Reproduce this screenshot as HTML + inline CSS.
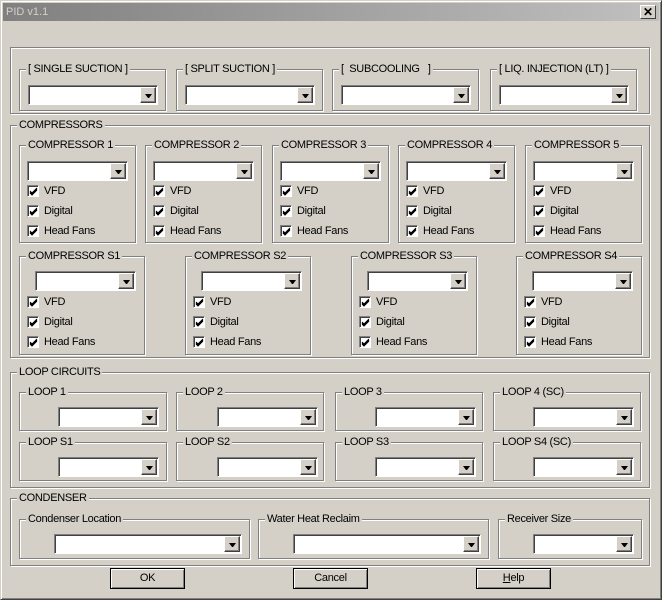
<!DOCTYPE html>
<html><head><meta charset="utf-8"><style>
*{box-sizing:border-box;margin:0;padding:0}
body{width:662px;height:600px;background:#d4d0c8;position:relative;overflow:hidden;font-family:"Liberation Sans",sans-serif;font-size:11px;color:#000}
.a{position:absolute}
.g{position:absolute;border:1px solid #808080;box-shadow:1px 1px 0 #fff, inset 1px 1px 0 #fff}
.gl{position:absolute;top:-8px;left:6px;background:#d4d0c8;padding:0 2px;white-space:nowrap;letter-spacing:-0.3px;line-height:14px}
.c{position:absolute;height:20px;background:#fff;border-top:1px solid #808080;border-left:1px solid #808080;border-right:1px solid #fff;border-bottom:1px solid #fff;box-shadow:inset 1px 1px 0 #404040}
.c b{position:absolute;right:1px;top:1px;width:16px;height:16px;background:#d4d0c8;border-top:1px solid #fff;border-left:1px solid #fff;border-right:1px solid #404040;border-bottom:1px solid #404040;box-shadow:inset -1px -1px 0 #808080}
.c b:after{content:"";position:absolute;left:4px;top:6px;border-left:3px solid transparent;border-right:3px solid transparent;border-top:4px solid #000;width:1px}
.k{position:absolute;width:12px;height:12px;background:#fff;border-top:1px solid #808080;border-left:1px solid #808080;border-right:1px solid #fff;border-bottom:1px solid #fff;box-shadow:inset 1px 1px 0 #404040}
.k svg{position:absolute;left:1px;top:1px}
.kl{position:absolute;white-space:nowrap;letter-spacing:-0.3px}
.btn{position:absolute;height:21px;width:75px;background:#d4d0c8;border:1px solid #000;box-shadow:inset 1px 1px 0 #fff,inset -1px -1px 0 #808080;text-align:center;line-height:19px;letter-spacing:-0.3px}
</style></head><body>
<div class="a" style="left:0;top:0;width:662px;height:600px;border:1px solid #d4d0c8;border-right-color:#404040;border-bottom-color:#404040;box-shadow:inset 1px 1px 0 #fff,inset -1px -1px 0 #808080"></div>
<div class="a" style="left:3px;top:3px;width:656px;height:18px;background:linear-gradient(90deg,#808080,#c0c0c0)"></div>
<div class="a" style="left:6px;top:4px;color:#d4d0c8;font-size:11px;line-height:16px">PID v1.1</div>
<div class="a" style="left:640px;top:5px;width:16px;height:14px;background:#d4d0c8;border-top:1px solid #fff;border-left:1px solid #fff;border-right:1px solid #404040;border-bottom:1px solid #404040;text-align:center;font-weight:bold;font-size:12px;line-height:12px">✕</div>
<div id="root"></div>
<script>
var h='';
function g(x,y,w,hh,t){h+='<div class="g" style="left:'+x+'px;top:'+y+'px;width:'+w+'px;height:'+hh+'px">'+(t?'<span class="gl">'+t+'</span>':'')+'</div>';}
function c(x,y,w){h+='<div class="c" style="left:'+x+'px;top:'+y+'px;width:'+w+'px"><b></b></div>';}
function k(x,y,t){h+='<div class="k" style="left:'+x+'px;top:'+(y+1)+'px"><svg width="9" height="9"><path d="M1 4 L3 6 L8 1 M1 5 L3 7 L8 2 M1 6 L3 8 L8 3" stroke="#000" stroke-width="1" fill="none"/></svg></div><div class="kl" style="left:'+(x+17)+'px;top:'+(y+1)+'px">'+t+'</div>';}
g(10,47,640,67,'');
[[19,'[ SINGLE SUCTION ]'],[176,'[ SPLIT SUCTION ]'],[332,'[&nbsp; SUBCOOLING&nbsp;&nbsp; ]'],[490,'[ LIQ. INJECTION (LT) ]']].forEach(function(a){g(a[0],69,147,42,a[1]);c(a[0]+9,85,130);});
g(10,125,640,233,'COMPRESSORS');
[19,145,272,398,525].forEach(function(x,i){g(x,145,117,98,'COMPRESSOR '+(i+1));c(x+8,161,101);k(x+8,184,'VFD');k(x+8,204,'Digital');k(x+8,224,'Head Fans');});
[19,185,351,516].forEach(function(x,i){g(x,256,126,99,'COMPRESSOR S'+(i+1));c(x+16,271,101);k(x+8,295,'VFD');k(x+8,315,'Digital');k(x+8,335,'Head Fans');});
g(10,372,640,116,'LOOP CIRCUITS');
[[19,58],[176,217],[335,375],[493,533]].forEach(function(a,i){var n=['1','2','3','4 (SC)'][i];g(a[0],392,148,39,'LOOP '+n);c(a[1],407,101);g(a[0],442,148,39,'LOOP S'+n);c(a[1],457,101);});
g(10,498,640,68,'CONDENSER');
g(19,519,231,40,'Condenser Location');c(54,534,188);
g(258,519,231,40,'Water Heat Reclaim');c(293,534,188);
g(498,519,144,40,'Receiver Size');c(533,534,101);
h+='<div class="btn" style="left:110px;top:568px">OK</div><div class="btn" style="left:293px;top:568px">Cancel</div><div class="btn" style="left:476px;top:568px"><u>H</u>elp</div>';
document.getElementById('root').innerHTML=h;
</script>
</body></html>
